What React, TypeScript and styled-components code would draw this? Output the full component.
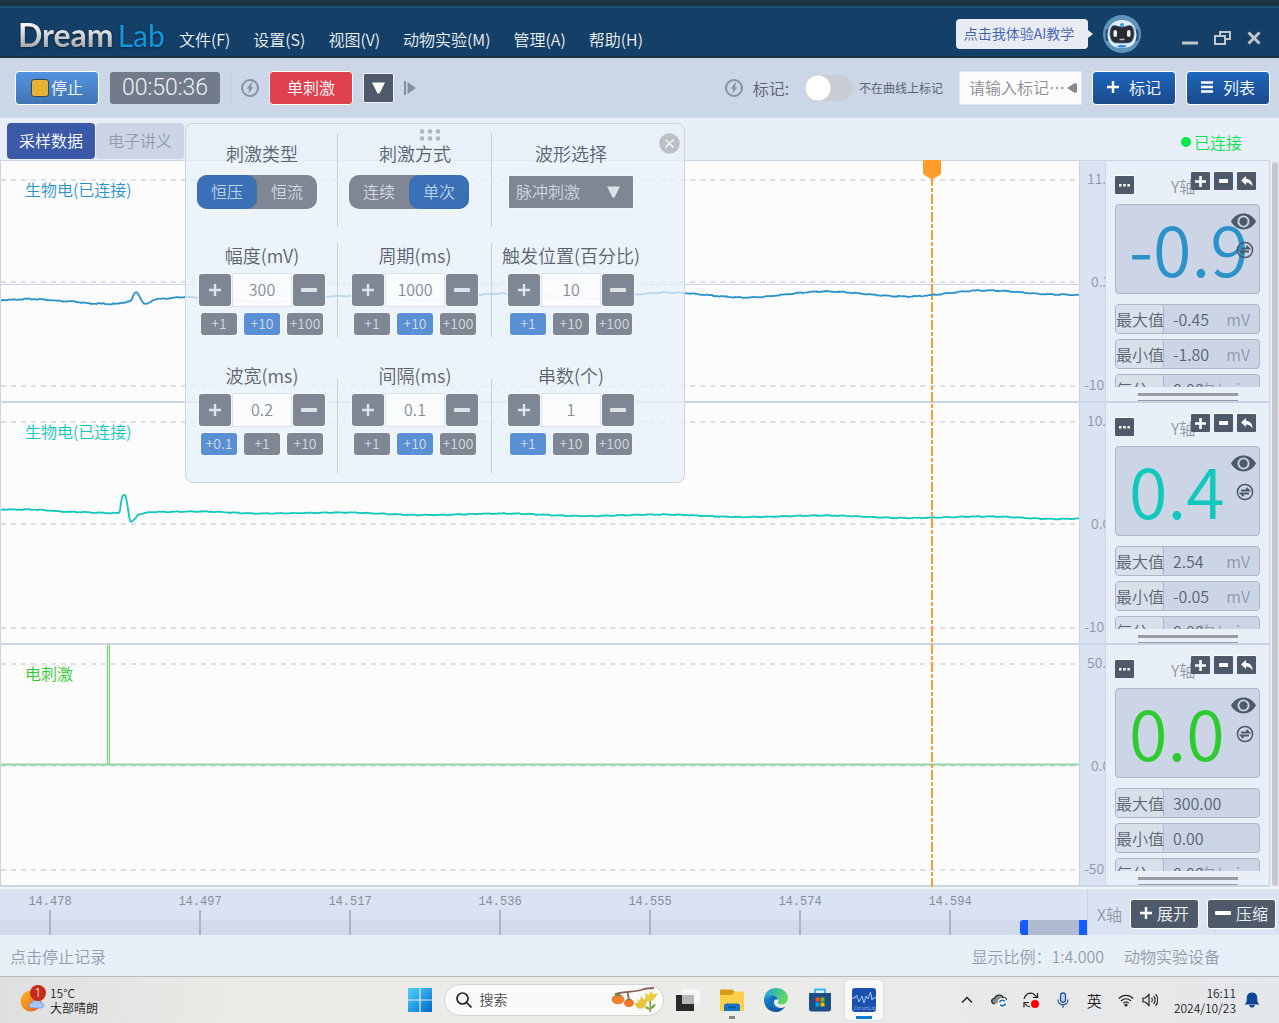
import React from "react";
import styled, { createGlobalStyle, css } from "styled-components";

const UI_FONT = `"Noto Sans CJK SC", "Noto Sans", sans-serif`;

const color = {
  navy: "#143f66",
  bar: "#cbd6e6",
  page: "#e8eff8",
  axis: "#dae3f1",
  line: "#c9d5e7",
  slate: "#4e5a6a",
  muted: "#8f98a5",
  text: "#5a6370",
  paper: "#fcfcfc",
  blueTrace: "#2b93ca",
  tealTrace: "#10c9bc",
  greenTrace: "#2ecb2e",
  orange: "#ff9c2b",
};

const GlobalStyle = createGlobalStyle`
  *, *::before, *::after { box-sizing: border-box; }
  body { margin: 0; background: ${color.page}; }
  button, input, select { font: inherit; color: inherit; margin: 0; }
  button { cursor: pointer; padding: 0; border: 0; background: none; }
  h2, p { margin: 0; font-weight: inherit; }
  svg { display: block; flex: none; }
`;

const Page = styled.div`
  display: flex;
  flex-direction: column;
  min-height: 100vh;
  font-family: ${UI_FONT};
  font-weight: 350;
  font-size: 16px;
  line-height: 24px;
  color: ${color.text};
`;

/* ---------- title bar ---------- */

const TitleBar = styled.header`
  display: flex;
  align-items: center;
  height: 58px;
  padding: 8px 18px 2px;
  border-top: 6px solid #183442;
  border-bottom: 2px solid #1c3240;
  background: linear-gradient(#1c5075 2px, ${color.navy} 2px);
`;

const Logo = styled.div`
  display: flex;
  align-items: baseline;
  gap: 4px;
  width: 161px;
  padding-top: 2px;
  font-family: Lato, sans-serif;
  font-size: 32px;
  line-height: 36px;
  filter: drop-shadow(0 1px 1px #0a2440);
`;

const LogoDream = styled.span`
  font-weight: 700;
  color: transparent;
  background: linear-gradient(#f4f4f4 25%, #a9a9ab 85%);
  background-clip: text;
`;

const LogoLab = styled.span`
  font-size: 30px;
  font-weight: 400;
  color: #1199dd;
`;

const Menu = styled.nav`
  display: flex;
  flex: 1;
  gap: 23px;
  padding-top: 10px;
`;

const MenuItem = styled.button`
  color: #eef2f6;
  white-space: nowrap;
`;

const TitleActions = styled.div`
  display: flex;
  align-items: center;
`;

const AiHint = styled.button`
  position: relative;
  height: 30px;
  width: 132px;
  padding: 0 6px 2px 0;
  margin-right: 15px;
  border-radius: 4px;
  background: #e8ebf1;
  color: #3d5fae;
  font-size: 14px;
  white-space: nowrap;
  &::after {
    content: "";
    position: absolute;
    left: 100%;
    top: 11px;
    border: 4px solid transparent;
    border-left: 5px solid #e8ebf1;
  }
`;

const WindowButtons = styled.div`
  display: flex;
  align-items: center;
  gap: 16px;
  margin-left: 41px;
  padding-top: 8px;
`;

/* ---------- toolbar ---------- */

const Toolbar = styled.div`
  display: flex;
  align-items: center;
  justify-content: space-between;
  height: 60px;
  padding: 0 9px 0 15px;
  background: ${color.bar};
`;

const ToolGroup = styled.div<{ $gap: number }>`
  display: flex;
  align-items: center;
  gap: ${(p) => p.$gap}px;
`;

const toolTones = {
  run: "linear-gradient(#5294e0, #4174b4)",
  danger: "#e0414f",
  deep: "linear-gradient(#1d66bf, #1c4a8a)",
};

const ToolButton = styled.button<{ $tone: keyof typeof toolTones; $gap?: number }>`
  display: flex;
  align-items: center;
  justify-content: center;
  gap: ${(p) => p.$gap ?? 2}px;
  width: 84px;
  height: 34px;
  padding-bottom: 2px;
  border: 1px solid #fff;
  border-radius: 4px;
  background: ${(p) => toolTones[p.$tone]};
  color: #fff;
`;

const StopMark = styled.span`
  width: 18px;
  height: 18px;
  margin-top: 2px;
  border: 1px solid #3b4656;
  border-radius: 3px;
  background: #eab137;
`;

const Timer = styled.time`
  display: flex;
  align-items: center;
  justify-content: center;
  width: 110px;
  height: 32px;
  margin-left: 1px;
  border-radius: 3px;
  background: #727b8a;
  color: #eef1f5;
  font-family: Roboto, sans-serif;
  font-size: 23px;
  font-weight: 300;
`;

const Divider = styled.span`
  width: 1px;
  height: 32px;
  background: #bcc7d6;
`;

const MoreButton = styled.button`
  display: grid;
  place-items: center;
  width: 31px;
  height: 30px;
  border: 1px solid #eef2f7;
  border-radius: 2px;
  background: ${color.slate};
`;

const SwitchLabel = styled.label`
  display: flex;
  align-items: center;
  gap: 16px;
  white-space: nowrap;
`;

const Switch = styled.input`
  appearance: none;
  width: 48px;
  height: 26px;
  border-radius: 13px;
  background: radial-gradient(circle at 13px 13px, #fff 12px, #c9cdd3 13px);
`;

const SwitchHint = styled.span`
  margin: 0 16px 0 6px;
  font-size: 12px;
  font-weight: 400;
  white-space: nowrap;
`;

const MarkField = styled.div`
  display: flex;
  align-items: center;
  width: 123px;
  height: 34px;
  margin-right: 10px;
  border: 1px solid #dfe5ee;
  background: ${color.paper};
`;

const MarkInput = styled.input`
  flex: 1;
  min-width: 0;
  padding: 0 0 2px 9px;
  border: 0;
  outline: 0;
  background: none;
  &::placeholder { color: #8b8f96; opacity: 1; }
`;

/* ---------- tabs ---------- */

const TabBar = styled.div`
  display: flex;
  align-items: center;
  gap: 1px;
  height: 42px;
  padding: 4px 37px 0 7px;
`;

const Tab = styled.button<{ $active?: boolean }>`
  width: 88px;
  height: 36px;
  padding-bottom: 2px;
  border-radius: 4px;
  background: ${(p) => (p.$active ? "#3b59a6" : "#ccd5e6")};
  color: ${(p) => (p.$active ? "#fff" : "#939ba8")};
`;

const Connection = styled.p`
  display: flex;
  align-items: center;
  gap: 3px;
  margin-left: auto;
  padding-top: 2px;
  color: #0ae14d;
  &::before {
    content: "";
    width: 10px;
    height: 10px;
    border-radius: 50%;
    background: #00e94c;
  }
`;

/* ---------- workspace ---------- */

const Workspace = styled.main`
  position: relative;
  display: flex;
  flex: 1;
`;

const Channels = styled.div`
  position: relative;
  display: grid;
  grid-template-rows: repeat(3, minmax(0, 1fr));
  flex: 1;
  min-width: 0;
  border-top: 1px solid ${color.line};
`;

const Channel = styled.section`
  display: grid;
  grid-template-columns: minmax(0, 1fr) 27px 164px;
  min-height: 242px;
  border-bottom: 2px solid ${color.line};
`;

const Plot = styled.div`
  display: grid;
  border-left: 1px solid ${color.line};
  background: ${color.paper};
  & > * { grid-area: 1 / 1; }
`;

const PlotSvg = styled.svg`
  width: 100%;
  height: 100%;
`;

const PlotName = styled.h2<{ $color: string }>`
  padding: 16px 24px;
  font-size: 16px;
  color: ${(p) => p.$color};
`;

const Scale = styled.div`
  display: flex;
  flex-direction: column;
  justify-content: space-between;
  padding: 7px 0;
  overflow: hidden;
  border-left: 1px solid ${color.line};
  border-right: 1px solid ${color.line};
  background: ${color.axis};
  color: ${color.muted};
  font-size: 14px;
  line-height: 20px;
`;

const ScaleValue = styled.span<{ $indent: number }>`
  padding-left: ${(p) => p.$indent}px;
  white-space: nowrap;
`;

const Readout = styled.aside`
  display: flex;
  flex-direction: column;
  padding: 11px 9px 0;
  border-right: 1px solid ${color.line};
`;

const ReadoutHead = styled.div`
  display: flex;
  align-items: flex-start;
  gap: 4px;
  height: 32px;
  padding: 0 4px 0 0;
`;

const MiniButton = styled.button<{ $low?: boolean }>`
  display: grid;
  place-items: center;
  width: 19px;
  height: 18px;
  margin-top: ${(p) => (p.$low ? 4 : 0)}px;
  border-radius: 1px;
  background: ${color.slate};
  box-shadow: 0 -1px 0 #fff;
`;

const AxisName = styled.span`
  flex: 1;
  margin: 2px -8px 0 0;
  padding-left: 33px;
  color: ${color.muted};
  white-space: nowrap;
`;

const BigValue = styled.div<{ $color: string }>`
  position: relative;
  height: 90px;
  padding-left: 13px;
  border: 1px solid #aab5c7;
  border-radius: 4px;
  background: #cbd5e6;
  color: ${(p) => p.$color};
  font-size: 70px;
  line-height: 84px;
  white-space: nowrap;
`;

const ValueTools = styled.div`
  position: absolute;
  top: 8px;
  right: 3px;
  display: flex;
  flex-direction: column;
  align-items: flex-end;
  gap: 11px;
`;

const Stats = styled.dl`
  display: flex;
  flex-direction: column;
  gap: 5px;
  height: 83px;
  margin: 10px 0 0;
  overflow: hidden;
`;

const Stat = styled.div`
  display: flex;
  flex: none;
  height: 30px;
  border: 1px solid #aab5c7;
  border-radius: 4px;
  background: #cbd5e6;
  line-height: 28px;
  white-space: nowrap;
`;

const StatName = styled.dt`
  flex: none;
  width: 48px;
  border-right: 1px solid #aab5c7;
  border-radius: 3px;
  background: #d8e0ea;
`;

const StatValue = styled.dd`
  flex: none;
  width: 32px;
  margin: 0 0 0 9px;
`;

const StatUnit = styled.dd`
  display: flex;
  flex: 1;
  min-width: 0;
  justify-content: flex-end;
  margin: 0 9px 0 0;
  color: ${color.muted};
`;

const ResizeHandle = styled.span`
  align-self: center;
  width: 100px;
  height: 8px;
  margin-top: auto;
  border-top: 3px solid #999ca3;
  border-bottom: 1px solid #999ca3;
`;

const ScrollTrack = styled.div`
  width: 9px;
  padding: 2px 1px 1px 2px;
`;

const ScrollThumb = styled.div`
  width: 6px;
  height: 100%;
  border-radius: 3px;
  background: #c6c8cb;
`;

const Cursor = styled.div`
  position: absolute;
  inset: 0 200px 0 0;
  pointer-events: none;
`;

const CursorLine = styled.div`
  position: absolute;
  top: 0;
  bottom: 0;
  left: 86.4%;
  width: 18px;
  margin-left: -9px;
  background: repeating-linear-gradient(
      ${color.orange} 0 8px, transparent 8px 10px, ${color.orange} 10px 14px, transparent 14px 16px,
      ${color.orange} 16px 18px
    ) center / 2px 100% no-repeat;
`;

/* ---------- stimulation panel ---------- */

const StimPanel = styled.form`
  position: absolute;
  top: -37px;
  left: 185px;
  display: grid;
  grid-template-columns: 152px 154px 158px 34px;
  grid-template-rows: 94px 94px 120px;
  row-gap: 16px;
  align-content: start;
  width: 500px;
  height: 360px;
  padding-top: 9px;
  border: 1px solid #ccd4e0;
  border-radius: 8px;
  background: rgba(232, 240, 250, 0.75);
`;

const StimCell = styled.div<{ $ruled: boolean; $top: number }>`
  display: flex;
  flex-direction: column;
  align-items: center;
  padding-top: ${(p) => p.$top}px;
  ${(p) =>
    p.$ruled &&
    css`
      background: linear-gradient(#c9d0db, #c9d0db) right bottom / 1px 94px no-repeat;
    `}
`;

const StimTitle = styled.label`
  font-size: 18px;
  line-height: 24px;
  white-space: nowrap;
`;

const Segments = styled.div`
  display: flex;
  align-self: flex-start;
  margin: 10px 0 0 11px;
  border-radius: 10px;
  background: #7f8795;
`;

const Segment = styled.button<{ $on: boolean }>`
  width: 60px;
  height: 34px;
  padding-bottom: 2px;
  border-radius: 10px;
  background: ${(p) => (p.$on ? "#3a70b5" : "transparent")};
  color: ${(p) => (p.$on ? "#bcd0e8" : "#d3d6dc")};
`;

const SelectBox = styled.div`
  display: grid;
  align-items: center;
  margin-top: 10px;
  & > * { grid-area: 1 / 1; }
  & > svg { justify-self: end; margin-right: 14px; pointer-events: none; }
`;

const WaveSelect = styled.select`
  appearance: none;
  width: 126px;
  height: 34px;
  padding: 0 7px 2px;
  border: 1px solid #f4f7fb;
  border-radius: 2px;
  background: #7f8795;
  color: #d3d6dc;
`;

const Stepper = styled.div`
  display: flex;
  gap: 1px;
  margin-top: 7px;
`;

const StepperButton = styled.button`
  display: grid;
  place-items: center;
  width: 32px;
  height: 32px;
  border-radius: 3px;
  background: #7f8795;
  box-shadow: 0 0 0 1px #f4f7fb;
`;

const StepperInput = styled.input`
  width: 60px;
  height: 34px;
  margin: -1px 0;
  padding: 0 0 2px;
  border: 1px solid #dde4ee;
  background: rgba(252, 253, 253, 0.85);
  color: #858c97;
  text-align: center;
`;

const Increments = styled.div`
  display: flex;
  gap: 7px;
  margin-top: 7px;
`;

const Increment = styled.button<{ $on: boolean }>`
  display: flex;
  align-items: center;
  justify-content: center;
  width: 36px;
  height: 22px;
  padding-bottom: 2px;
  border-radius: 3px;
  background: ${(p) => (p.$on ? "#5990d3" : "#7f8795")};
  box-shadow: 0 0 0 1px #f4f7fb;
  color: #d3d8df;
  font-size: 14px;
`;

const Grip = styled.span`
  position: absolute;
  top: 5px;
  left: 234px;
`;

const ClosePanel = styled.button`
  position: absolute;
  top: 9px;
  right: 4px;
`;

/* ---------- time axis and status ---------- */

const TimeRow = styled.div`
  display: flex;
  height: 48px;
  border-top: 2px solid #f2f6fb;
  background: ${color.axis};
`;

const Ruler = styled.div`
  position: relative;
  flex: 1;
  min-width: 0;
  overflow: hidden;
  border-right: 1px solid ${color.line};
  background: linear-gradient(${color.axis} 31px, #d1dbeb 31px);
`;

const Ticks = styled.div`
  display: flex;
  margin-left: -25px;
`;

const Tick = styled.span`
  flex: none;
  width: 150px;
  height: 46px;
  padding-top: 3px;
  background: linear-gradient(#abb4c6, #abb4c6) center bottom / 2px 25px no-repeat;
  color: #858e9c;
  font-family: "Liberation Mono", monospace;
  font-size: 12px;
  line-height: 20px;
  text-align: center;
`;

const RangeThumb = styled.span`
  position: absolute;
  right: 0;
  bottom: 0;
  width: 67px;
  height: 15px;
  border: solid #145cff;
  border-width: 0 8px;
  border-radius: 3px 0 0 3px;
  background: #b0bad0;
`;

const TimeTools = styled.div`
  display: flex;
  align-items: center;
  gap: 8px;
  padding: 4px 3px 0 9px;
  color: ${color.muted};
`;

const TimeButton = styled.button`
  display: flex;
  align-items: center;
  justify-content: center;
  gap: 5px;
  width: 69px;
  height: 30px;
  padding-bottom: 2px;
  border: 1px solid #fff;
  border-radius: 3px;
  background: ${color.slate};
  color: #f0f2f5;
  white-space: nowrap;
`;

const StatusBar = styled.footer`
  display: flex;
  align-items: center;
  gap: 20px;
  height: 41px;
  padding: 0 59px 0 10px;
  color: #949dab;
  & > :first-child { flex: 1; }
`;

/* ---------- desktop taskbar ---------- */

const Taskbar = styled.div`
  display: flex;
  align-items: center;
  height: 47px;
  padding: 0 19px 0 20px;
  border-top: 1px solid #b7b9ba;
  background: linear-gradient(90deg, #dedfdf, #ecebe7 20%, #ebebe8 60%, #e4e7ea);
  color: #1b1b1b;
  font-size: 12px;
  line-height: 15px;
`;

const TaskSide = styled.div<{ $end?: boolean }>`
  display: flex;
  flex: 1;
  align-items: center;
  justify-content: ${(p) => (p.$end ? "flex-end" : "flex-start")};
  gap: ${(p) => (p.$end ? 16 : 4)}px;
  white-space: nowrap;
`;

const TrayGroup = styled.div`
  display: flex;
  align-items: center;
  gap: 8px;
`;

const TaskCenter = styled.div`
  display: flex;
  align-items: center;
  gap: 12px;
  margin-left: 10px;
`;

const Apps = styled.div`
  display: flex;
  gap: 12px;
  margin-left: -4px;
`;

const SearchBox = styled.label`
  display: flex;
  align-items: center;
  gap: 8px;
  width: 220px;
  height: 32px;
  padding: 0 4px 0 11px;
  border: 1px solid #d5d5d3;
  border-radius: 16px;
  background: #fafaf9;
`;

const SearchInput = styled.input`
  flex: 1;
  min-width: 0;
  padding: 0 0 2px;
  border: 0;
  outline: 0;
  background: none;
  font-size: 14px;
  &::placeholder { color: #4a4a4a; opacity: 1; }
`;

const AppSlot = styled.button<{ $state?: "running" | "active" }>`
  display: grid;
  place-items: center;
  width: ${(p) => (p.$state === "active" ? 38 : 32)}px;
  height: 40px;
  border-radius: 4px;
  ${(p) =>
    p.$state === "active" &&
    css`
      margin-left: -3px;
      background: linear-gradient(#0a78d4, #0a78d4) center bottom 1px / 16px 3px no-repeat, #f8f8f8;
      box-shadow: 0 0 2px #ccc;
    `}
  ${(p) =>
    p.$state === "running" &&
    css`
      background: linear-gradient(#86868a, #86868a) center bottom 1px / 6px 3px no-repeat;
    `}
`;

const Weather = styled.p`
  display: flex;
  flex-direction: column;
  color: #222;
`;

const Clock = styled.time`
  display: flex;
  flex-direction: column;
  text-align: right;
`;

const Ime = styled.span`
  font-size: 15px;
`;

/* ---------- drawings ---------- */

const BoltIcon = () => (
  <svg width="18" height="18" viewBox="0 0 18 18">
    <circle cx="9" cy="9" r="8" fill="none" stroke="#8791a0" strokeWidth="2" />
    <path d="M10.500 3.500 5.500 9.800h2.800L7.200 14.500 12.500 8.200H9.800L11.400 3.500z" fill="#8791a0" />
  </svg>
);

const Plus = ({ size, tone = "#fff", weight = 2.4 }: { size: number; tone?: string; weight?: number }) => (
  <svg width={size} height={size} viewBox="0 0 12 12">
    <path d="M6 0v12M0 6h12" stroke={tone} strokeWidth={weight} />
  </svg>
);

const Minus = ({ width, tone = "#fff" }: { width: number; tone?: string }) => (
  <svg width={width} height="4" viewBox={`0 0 ${width} 4`}>
    <rect width={width} height="4" rx="1" fill={tone} />
  </svg>
);

const Down = ({ tone }: { tone: string }) => (
  <svg width="13" height="12" viewBox="0 0 13 12">
    <path d="M0 .5h13L7.5 11.5h-2z" fill={tone} />
  </svg>
);

const RobotIcon = () => (
  <svg width="38" height="38" viewBox="0 0 38 38">
    <circle cx="19" cy="19" r="19" fill="#5b95bb" />
    <rect x="2.500" y="14" width="5" height="12" rx="2.500" fill="#2c4f78" />
    <rect x="30.500" y="14" width="5" height="12" rx="2.500" fill="#2c4f78" />
    <path d="M4.500 20C5 10 11 5 19 5s14 5 14.500 15C33 29 28 33 19 33S5 29 4.500 20z" fill="#e9eef5" />
    <path d="M8 13c1-3 4-3 6-2 3 1 7 1 10 0 2-1 5-1 6 2 2 5 1 10-1 13-2 2-4 2-6 2h-8c-2 0-4 0-6-2-2-3-3-8-1-13z" fill="#2a2c31" stroke="#3c7fd8" strokeWidth=".8" />
    <rect x="10.500" y="15" width="3.500" height="7" rx="1.700" fill="#e9edf2" />
    <rect x="24" y="15" width="3.500" height="7" rx="1.700" fill="#e9edf2" />
    <path d="M16.500 24.500h5" stroke="#b9bdc4" strokeWidth="1.500" />
    <ellipse cx="19" cy="9.500" rx="2" ry="1.500" fill="#2d9be8" />
    <path d="M14 31c2-1.500 8-1.500 10 0-2 2-8 2-10 0z" fill="#2f86e6" />
  </svg>
);

const EyeIcon = () => (
  <svg width="25" height="17" viewBox="0 0 26 17">
    <path d="M0 8.500C6-2.500 20-2.500 26 8.500 20 19.500 6 19.500 0 8.500z" fill={color.slate} />
    <circle cx="13" cy="8.500" r="5.300" fill={color.slate} stroke="#cbd5e6" strokeWidth="2" />
  </svg>
);

const SwapIcon = () => (
  <svg width="22" height="18" viewBox="-2 0 22 18" fill="none" stroke={color.slate}>
    <circle cx="9" cy="9" r="7.600" strokeWidth="1.500" />
    <path d="M5 7.500h8L10.500 5M13 10.500H5L7.500 13" strokeWidth="1.800" />
  </svg>
);

const UndoIcon = () => (
  <svg width="12" height="11" viewBox="0 0 12 11">
    <path d="M0 4.500 5 0v2.700c4 .2 6.500 3 6.500 7.800C10 7.800 8 6.500 5 6.500V9z" fill="#fff" />
  </svg>
);

const CloseIcon = () => (
  <svg width="21" height="21" viewBox="0 0 21 21">
    <circle cx="10.500" cy="10.500" r="10.300" fill="#bcbfc4" />
    <path d="m6.500 6.500 8 8m0-8-8 8" stroke="#f3f5f8" strokeWidth="1.500" />
  </svg>
);

const GripIcon = () => (
  <svg width="20" height="12" viewBox="0 0 20 12" fill="#b0b3b9">
    {[2, 10, 18].map((x) => (
      <g key={x}>
        <circle cx={x} cy="2.500" r="2.200" />
        <circle cx={x} cy="9.500" r="2.200" />
      </g>
    ))}
  </svg>
);

const WeatherIcon = () => (
  <svg width="26" height="30" viewBox="0 0 26 30">
    <defs>
      <linearGradient id="sun" x1="0" y1="0" x2="1" y2="1">
        <stop stopColor="#f5bc2c" />
        <stop offset="1" stopColor="#f0590f" />
      </linearGradient>
    </defs>
    <circle cx="11" cy="16" r="10.500" fill="url(#sun)" />
    <path d="M12 23c-4 0-4-5 0-5 1-4 8-4 9 0 4-.5 4 5 0 5z" fill="#a6c4f7" stroke="#6c96e6" strokeWidth=".7" />
    <circle cx="18" cy="8" r="8" fill="#c42b1c" />
    <text x="18" y="12" textAnchor="middle" fontSize="12" fontFamily="Noto Sans, sans-serif" fill="#fff">1</text>
  </svg>
);

const StartIcon = () => (
  <svg width="24" height="24" viewBox="0 0 24 24">
    <defs>
      <linearGradient id="win" x1="0" y1="0" x2="1" y2="1">
        <stop stopColor="#4fd2fb" />
        <stop offset="1" stopColor="#0069cc" />
      </linearGradient>
    </defs>
    <path d="M0 0h11.400v11.400H0zM12.600 0H24v11.400H12.600zM0 12.600h11.400V24H0zM12.600 12.600H24V24H12.600z" fill="url(#win)" />
  </svg>
);

const SearchIcon = () => (
  <svg width="16" height="16" viewBox="0 0 16 16" fill="none" stroke="#222" strokeWidth="1.700">
    <circle cx="6.500" cy="6.500" r="5.500" />
    <path d="m10.500 10.500 5 5" />
  </svg>
);

const AutumnIcon = () => (
  <svg width="48" height="28" viewBox="0 0 48 28">
    <path d="M4 8c10-3 20-2 26-4 5-2 8-2 13-2M17 6c-1 3 1 5 1 8" fill="none" stroke="#8d5f5c" strokeWidth="1.800" />
    <ellipse cx="7" cy="13.500" rx="6.300" ry="4.800" fill="#f3802a" />
    <path d="M3 9.500c2-2 6-2 8 0-2 1-6 1-8 0z" fill="#6f8f3a" />
    <ellipse cx="18" cy="17" rx="5" ry="4" fill="#ef7424" />
    <path d="M15 13.500c2-1 4-1 6 0-2 1-4 1-6 0z" fill="#6f8f3a" />
    <path d="M39 26c1-5 0-8 0-12" fill="none" stroke="#6d9732" strokeWidth="1.500" />
    <path d="M39 23c1-3 3-5 6-5-1 3-3 5-6 5zm0 0c-1-2-3-3-5-2 1 2 3 3 5 2z" fill="#7da63c" />
    <path d="m24 17 3 0-1-4 3 2 1-5 3 4 2-3 1 5-2 5-5 2-4-2z" fill="#e8c43c" />
    <path d="m35 12-1-5 4 2 2-4 2 3 5-1-3 5-3 3-5 0z" fill="#f0cb3f" />
  </svg>
);

const TaskViewIcon = () => (
  <svg width="24" height="24" viewBox="0 0 24 24">
    <rect y="7" width="18" height="16" fill="#2a2a2a" />
    <rect x="6" y="1" width="18" height="15" fill="#f7f7f7" />
    <rect x="6" y="7" width="12" height="9" fill="#b7b7b7" />
  </svg>
);

const FolderIcon = () => (
  <svg width="24" height="24" viewBox="0 0 24 24">
    <path d="M0 3c0-1 .5-1.500 1.500-1.500h11L15 4h7.500c1 0 1.500.5 1.500 1.500V21H0z" fill="#d89b14" />
    <path d="M0 7h12l2.500-3.500H22.500c1 0 1.500.5 1.500 1.500V23H0z" fill="#fdd04c" />
    <path d="M4 23v-5c0-1.500 1-2.500 2.500-2.500h11c1.500 0 2.500 1 2.500 2.500v5z" fill="#1a72c4" />
    <rect x="8" y="18.500" width="8" height="1.800" rx=".9" fill="#0e559b" />
  </svg>
);

const EdgeIcon = () => (
  <svg width="24" height="24" viewBox="0 0 24 24">
    <defs>
      <linearGradient id="edgeTop" x1="0" y1="0" x2="1" y2=".4">
        <stop stopColor="#1c9fe0" />
        <stop offset="1" stopColor="#5fdc60" />
      </linearGradient>
      <linearGradient id="edgeLow" x1="0" y1="0" x2="0" y2="1">
        <stop stopColor="#1f96dc" />
        <stop offset="1" stopColor="#0f4f9c" />
      </linearGradient>
    </defs>
    <path d="M0 12C0 5 5 0 12 0s12 4.500 12 10c0 4-3 6.500-6.500 6.500-3 0-4-1-3.500-2 1.500-2 .5-6-4-6C5 8.500 1 11 0 12z" fill="url(#edgeTop)" />
    <path d="M0 12c.5-3 4-5.500 8.500-4.500C6 9 5.500 13 8 16.500c3 4 9 4.500 13.500 2C19 22 16 24 12 24 5 24 0 18.500 0 12z" fill="url(#edgeLow)" />
    <path d="M8.500 7.500c3.500.3 5.500 2 5.500 4.500-1.500-1-3.500-.5-4 1.500-.4 3 2.500 6.500 7 6.500-6 2-12-2-12-7.500 0-2.500 1.500-4.500 3.500-5z" fill="#1470b8" />
  </svg>
);

const StoreIcon = () => (
  <svg width="24" height="24" viewBox="0 0 24 24">
    <path d="M7 6V1.500h10V6" fill="none" stroke="#35b6f0" strokeWidth="1.800" />
    <path d="M1 5h22v16c0 1.500-1 2.500-2.500 2.500h-17C2 23.500 1 22.500 1 21z" fill="#1b4f86" />
    <path d="M7.500 9.500h4v4h-4z" fill="#f25022" />
    <path d="M12.500 9.500h4v4h-4z" fill="#7fba00" />
    <path d="M7.500 14.500h4v4h-4z" fill="#00a4ef" />
    <path d="M12.500 14.500h4v4h-4z" fill="#ffb900" />
  </svg>
);

const DreamAppIcon = () => (
  <svg width="24" height="24" viewBox="0 0 24 24">
    <rect width="24" height="24" rx="3" fill="#1a4fae" />
    <path d="M0 10h3l1.500-3L7 14l3-6 2 7 2-7 2 3 2.500-7L20 12l1-2h3" fill="none" stroke="#a9c8f2" strokeWidth="1" />
    <text x="2" y="22" fontSize="5" fontFamily="Lato, sans-serif" fill="#cfe0f6">DreamLab</text>
  </svg>
);

const trayDrawings = {
  chevron: <path d="m3 10.500 5-5 5 5" strokeWidth="1.500" />,
  cloud: (
    <>
      <path d="M3.500 12C-.5 11 0 6.500 3.500 6.500 5 2 11 2 12 5.500c3 0 4 2 3.500 4" fill="#8a8a8a" />
      <circle cx="11.500" cy="11" r="5" fill="#fff" stroke="none" />
      <path d="M8.500 10.500c.5-2.500 4-3 5.500-1m.5 2c-.5 2.500-4 3-5.500 1" stroke="#1766c0" strokeWidth="1.500" />
    </>
  ),
  sync: (
    <>
      <path d="M1 7C1.500 3 6 0 10 1.500L14 5M14.500 1v4.500H10M1 15.500v-5h5M2 11.500c1 2 3 3 5 3.500" />
      <circle cx="12" cy="12" r="4" fill="#f00" stroke="none" />
    </>
  ),
  mic: (
    <g stroke="#1b4b96">
      <rect x="5.500" y=".8" width="5" height="9.500" rx="2.500" fill="#bcd2f0" />
      <path d="M3 7.500c0 7 10 7 10 0M8 12.800v3" />
    </g>
  ),
  wifi: (
    <>
      <path d="M.8 6.500c4-4.300 10.400-4.300 14.400 0M3 9c3-3 7-3 10 0M5.200 11.300c1.700-1.600 3.900-1.600 5.600 0" />
      <circle cx="8" cy="13" r="1" fill="#222" />
    </>
  ),
  sound: <path d="M1 6v4h2.500L7 13.500v-11L3.500 6zM9.500 6c1 1 1 3 0 4M11.500 4c2.200 2 2.200 6 0 8M13.500 2.200c3 3 3 8.600 0 11.600" />,
  bell: <path d="M2 12c2-2 1-5 1.500-7.500 1-4.500 8-4.500 9 0C13 7 12 10 14 12zM6 13.500c.5 2 3.500 2 4 0z" fill="#0b4593" stroke="#0b4593" />,
};

const TrayIcon = ({ name }: { name: keyof typeof trayDrawings }) => (
  <svg width="16" height="16" viewBox="0 0 16 16" fill="none" stroke="#222" strokeWidth="1.200">
    {trayDrawings[name]}
  </svg>
);

/* ---------- data ---------- */

type Point = [number, number];

const blueKeys: Point[] = [
  [0, 139], [30, 138], [70, 140.5], [90, 142.500], [115, 143], [122, 141.500], [129, 140.500], [135, 131], [144, 143],
  [156, 138], [185, 136], [220, 138], [265, 141], [340, 135], [425, 139.500], [500, 132.500], [590, 137.500],
  [668, 131.500], [745, 136.500], [825, 130.500], [905, 135.500], [985, 129.500], [1060, 133.500], [1079, 134],
];

const tealKeys: Point[] = [
  [0, 106.500], [30, 106.500], [70, 109], [112, 110], [118, 110], [122, 92], [124, 92], [130, 119], [139, 111], [150, 109],
  [200, 108.500], [260, 110.500], [340, 109.500], [425, 112], [500, 110.500], [585, 113], [660, 111.500], [745, 114], [825, 112.500],
  [905, 115], [985, 113.500], [1060, 116], [1079, 115.500],
];

const greenKeys: Point[] = [[0, 119.500], [1079, 119.500]];

function tracePath(keys: Point[], noise: number): string {
  const parts: string[] = [];
  let seg = 0;
  for (let x = 0; x <= 1079; x += 1) {
    while (seg < keys.length - 2 && x > keys[seg + 1][0]) seg += 1;
    const [x0, y0] = keys[seg];
    const [x1, y1] = keys[seg + 1];
    const t = (1 - Math.cos((Math.PI * (x - x0)) / (x1 - x0))) / 2;
    const jitter = (Math.sin(x * 12.9898) * 43758.5453) % 1;
    parts.push(`${x} ${(y0 + (y1 - y0) * t + jitter * noise).toFixed(2)}`);
  }
  return `M${parts.join("L")}`;
}

const channels = [
  {
    name: "生物电(已连接)", tone: color.blueTrace, path: tracePath(blueKeys, 0.5), baseline: 123.5,
    scale: ["11.59", "0.38", "-10"], value: "-0.9",
    stats: [["最大值", "-0.45", "mV"], ["最小值", "-1.80", "mV"], ["每分", "0.00", "次/min"]],
  },
  {
    name: "生物电(已连接)", tone: color.tealTrace, path: tracePath(tealKeys, 0.4),
    scale: ["10.00", "0.00", "-10"], value: "0.4",
    stats: [["最大值", "2.54", "mV"], ["最小值", "-0.05", "mV"], ["每分", "0.00", "次/min"]],
  },
  {
    name: "电刺激", tone: color.greenTrace, path: tracePath(greenKeys, 0), pulse: true,
    scale: ["50.00", "0.00", "-50"], value: "0.0",
    stats: [["最大值", "300.00", ""], ["最小值", "0.00", ""], ["每分", "0.00", "次/min"]],
  },
];

const scaleIndents = [7, 11, 4];

const toggles = [
  { title: "刺激类型", options: ["恒压", "恒流"], on: 0 },
  { title: "刺激方式", options: ["连续", "单次"], on: 1 },
];

const steppers = [
  { title: "幅度(mV)", value: "300", steps: ["+1", "+10", "+100"], on: 1 },
  { title: "周期(ms)", value: "1000", steps: ["+1", "+10", "+100"], on: 1 },
  { title: "触发位置(百分比)", value: "10", steps: ["+1", "+10", "+100"], on: 0 },
  { title: "波宽(ms)", value: "0.2", steps: ["+0.1", "+1", "+10"], on: 0 },
  { title: "间隔(ms)", value: "0.1", steps: ["+1", "+10", "+100"], on: 1 },
  { title: "串数(个)", value: "1", steps: ["+1", "+10", "+100"], on: 0 },
];

const menus = ["文件(F)", "设置(S)", "视图(V)", "动物实验(M)", "管理(A)", "帮助(H)"];
const times = ["14.478", "14.497", "14.517", "14.536", "14.555", "14.574", "14.594"];

/* ---------- sections ---------- */

type ChannelData = (typeof channels)[number];

const ChannelRow = ({ data }: { data: ChannelData }) => (
  <Channel>
    <Plot>
      <PlotSvg viewBox="0 0 1079 240" preserveAspectRatio="none">
        {[19, 121, 225].map((y) => (
          <path key={y} d={`M0 ${y}H1076`} stroke="#dfe0e5" strokeWidth="2" strokeDasharray="5 5" />
        ))}
        {data.baseline && <path d={`M0 ${data.baseline}H1079`} stroke={color.line} />}
        {data.pulse ? (
          <>
            <path d={data.path} fill="none" stroke="#8fd3a4" strokeWidth="2" />
            <path d="M106.500 119.500V0M108.500 0V119.500" fill="none" stroke="#5cd45c" strokeWidth="1" />
          </>
        ) : (
          <path d={data.path} fill="none" stroke={data.tone} strokeWidth="1.800" />
        )}
      </PlotSvg>
      <PlotName $color={data.tone}>{data.name}</PlotName>
    </Plot>
    <Scale>
      {data.scale.map((label, i) => (
        <ScaleValue key={i} $indent={scaleIndents[i]}>{label}</ScaleValue>
      ))}
    </Scale>
    <Readout>
      <ReadoutHead>
        <MiniButton $low aria-label="更多">
          <svg width="11" height="3" viewBox="0 0 11 3" fill="#fff">
            <path d="M0 0h2.500v2.500H0zM4.200 0h2.500v2.500H4.200zM8.400 0h2.500v2.500H8.400z" />
          </svg>
        </MiniButton>
        <AxisName>Y轴</AxisName>
        <MiniButton aria-label="放大"><Plus size={11} weight={2.8} /></MiniButton>
        <MiniButton aria-label="缩小"><Minus width={9} /></MiniButton>
        <MiniButton aria-label="还原"><UndoIcon /></MiniButton>
      </ReadoutHead>
      <BigValue $color={data.tone}>
        {data.value}
        <ValueTools>
          <EyeIcon />
          <SwapIcon />
        </ValueTools>
      </BigValue>
      <Stats>
        {data.stats.map(([name, value, unit]) => (
          <Stat key={name}>
            <StatName>{name}</StatName>
            <StatValue>{value}</StatValue>
            <StatUnit>{unit}</StatUnit>
          </Stat>
        ))}
      </Stats>
      <ResizeHandle />
    </Readout>
  </Channel>
);

const StimulationPanel = () => (
  <StimPanel onSubmit={(e) => e.preventDefault()}>
    {toggles.map((t) => (
      <StimCell key={t.title} $ruled $top={8}>
        <StimTitle as="span">{t.title}</StimTitle>
        <Segments>
          {t.options.map((o, i) => (
            <Segment key={o} type="button" $on={i === t.on} aria-pressed={i === t.on}>{o}</Segment>
          ))}
        </Segments>
      </StimCell>
    ))}
    <StimCell $ruled={false} $top={8}>
      <StimTitle htmlFor="wave">波形选择</StimTitle>
      <SelectBox>
        <WaveSelect id="wave"><option>脉冲刺激</option></WaveSelect>
        <Down tone="#dfe2e7" />
      </SelectBox>
    </StimCell>
    <span />
    {steppers.map((s, i) => (
      <React.Fragment key={s.title}>
        <StimCell $ruled={i % 3 !== 2} $top={i < 3 ? 0 : 10}>
          <StimTitle htmlFor={`stim-${i}`}>{s.title}</StimTitle>
          <Stepper>
            <StepperButton type="button" aria-label="增加"><Plus size={12} tone="#dfe2e7" /></StepperButton>
            <StepperInput id={`stim-${i}`} defaultValue={s.value} />
            <StepperButton type="button" aria-label="减少"><Minus width={16} tone="#dfe2e7" /></StepperButton>
          </Stepper>
          <Increments>
            {s.steps.map((step, n) => (
              <Increment key={step} type="button" $on={n === s.on}>{step}</Increment>
            ))}
          </Increments>
        </StimCell>
        {i % 3 === 2 && <span />}
      </React.Fragment>
    ))}
    <Grip><GripIcon /></Grip>
    <ClosePanel type="button" aria-label="关闭"><CloseIcon /></ClosePanel>
  </StimPanel>
);

export default function App() {
  return (
    <Page>
      <GlobalStyle />
      <TitleBar>
        <Logo>
          <LogoDream>Dream</LogoDream>
          <LogoLab>Lab</LogoLab>
        </Logo>
        <Menu>
          {menus.map((m) => <MenuItem key={m}>{m}</MenuItem>)}
        </Menu>
        <TitleActions>
          <AiHint>点击我体验AI教学</AiHint>
          <RobotIcon />
          <WindowButtons>
            <button aria-label="最小化">
              <svg width="16" height="14" viewBox="0 0 16 14"><path d="M0 12h16" stroke="#c2c5ca" strokeWidth="3" /></svg>
            </button>
            <button aria-label="还原窗口">
              <svg width="17" height="14" viewBox="0 0 17 14" fill="none" stroke="#c2c5ca" strokeWidth="2">
                <path d="M6 5V1h10v7h-5M1 5h10v8H1z" />
              </svg>
            </button>
            <button aria-label="关闭窗口">
              <svg width="14" height="14" viewBox="0 0 14 14"><path d="m1.500 1.500 11 11m0-11-11 11" stroke="#c2c5ca" strokeWidth="3" /></svg>
            </button>
          </WindowButtons>
        </TitleActions>
      </TitleBar>

      <Toolbar>
        <ToolGroup $gap={10}>
          <ToolButton $tone="run"><StopMark />停止</ToolButton>
          <Timer>00:50:36</Timer>
          <Divider />
          <BoltIcon />
          <ToolButton $tone="danger">单刺激</ToolButton>
          <MoreButton aria-label="展开参数"><Down tone="#fff" /></MoreButton>
          <svg width="12" height="14" viewBox="0 0 12 14" fill="#87909e">
            <path d="M0 0h2v14H0zM3.500 1 12 7l-8.500 6z" />
          </svg>
        </ToolGroup>
        <ToolGroup $gap={0}>
          <ToolGroup $gap={10}>
            <BoltIcon />
            <SwitchLabel>标记:<Switch type="checkbox" /></SwitchLabel>
          </ToolGroup>
          <SwitchHint>不在曲线上标记</SwitchHint>
          <MarkField>
            <MarkInput aria-label="标记内容" placeholder="请输入标记…" />
            <button aria-label="选择标记">
              <svg width="14" height="10" viewBox="0 0 14 10"><path d="M0 5 7 .5C9 0 10 0 10 2v6c0 2-1 2-3 1.500z" fill="#85878b" /></svg>
            </button>
          </MarkField>
          <ToolGroup $gap={10}>
            <ToolButton $tone="deep" $gap={10}><Plus size={12} />标记</ToolButton>
            <ToolButton $tone="deep" $gap={10}>
              <svg width="12" height="12" viewBox="0 0 12 12"><path d="M0 1.500h12M0 6h12M0 10.500h12" stroke="#fff" strokeWidth="2.400" /></svg>
              列表
            </ToolButton>
          </ToolGroup>
        </ToolGroup>
      </Toolbar>

      <TabBar>
        <Tab $active>采样数据</Tab>
        <Tab>电子讲义</Tab>
        <Connection>已连接</Connection>
      </TabBar>

      <Workspace>
        <Channels>
          {channels.map((c, i) => <ChannelRow key={i} data={c} />)}
        </Channels>
        <ScrollTrack><ScrollThumb /></ScrollTrack>
        <Cursor>
          <CursorLine>
            <svg width="18" height="26" viewBox="0 0 18 26">
              <path d="M0 0h18v13c0 2-5 4-8 6v7H8v-7c-3-2-8-4-8-6z" fill={color.orange} />
            </svg>
          </CursorLine>
        </Cursor>
        <StimulationPanel />
      </Workspace>

      <TimeRow>
        <Ruler>
          <Ticks>{times.map((t) => <Tick key={t}>{t}</Tick>)}</Ticks>
          <RangeThumb />
        </Ruler>
        <TimeTools>
          X轴
          <TimeButton><Plus size={12} />展开</TimeButton>
          <TimeButton><Minus width={16} />压缩</TimeButton>
        </TimeTools>
      </TimeRow>

      <StatusBar>
        <span>点击停止记录</span>
        <span>显示比例：1:4.000</span>
        <span>动物实验设备</span>
      </StatusBar>

      <Taskbar>
        <TaskSide>
          <WeatherIcon />
          <Weather><span>15°C</span><span>大部晴朗</span></Weather>
        </TaskSide>
        <TaskCenter>
          <button aria-label="开始"><StartIcon /></button>
          <SearchBox>
            <SearchIcon />
            <SearchInput aria-label="搜索" placeholder="搜索" />
            <AutumnIcon />
          </SearchBox>
          <Apps>
            <AppSlot aria-label="任务视图"><TaskViewIcon /></AppSlot>
            <AppSlot $state="running" aria-label="文件资源管理器"><FolderIcon /></AppSlot>
            <AppSlot aria-label="Edge"><EdgeIcon /></AppSlot>
            <AppSlot aria-label="应用商店"><StoreIcon /></AppSlot>
            <AppSlot $state="active" aria-label="DreamLab"><DreamAppIcon /></AppSlot>
          </Apps>
        </TaskCenter>
        <TaskSide $end>
          <TrayIcon name="chevron" />
          <TrayIcon name="cloud" />
          <TrayIcon name="sync" />
          <TrayIcon name="mic" />
          <Ime>英</Ime>
          <TrayGroup>
            <TrayIcon name="wifi" />
            <TrayIcon name="sound" />
          </TrayGroup>
          <TrayGroup>
            <Clock><span>16:11</span><span>2024/10/23</span></Clock>
            <TrayIcon name="bell" />
          </TrayGroup>
        </TaskSide>
      </Taskbar>
    </Page>
  );
}
